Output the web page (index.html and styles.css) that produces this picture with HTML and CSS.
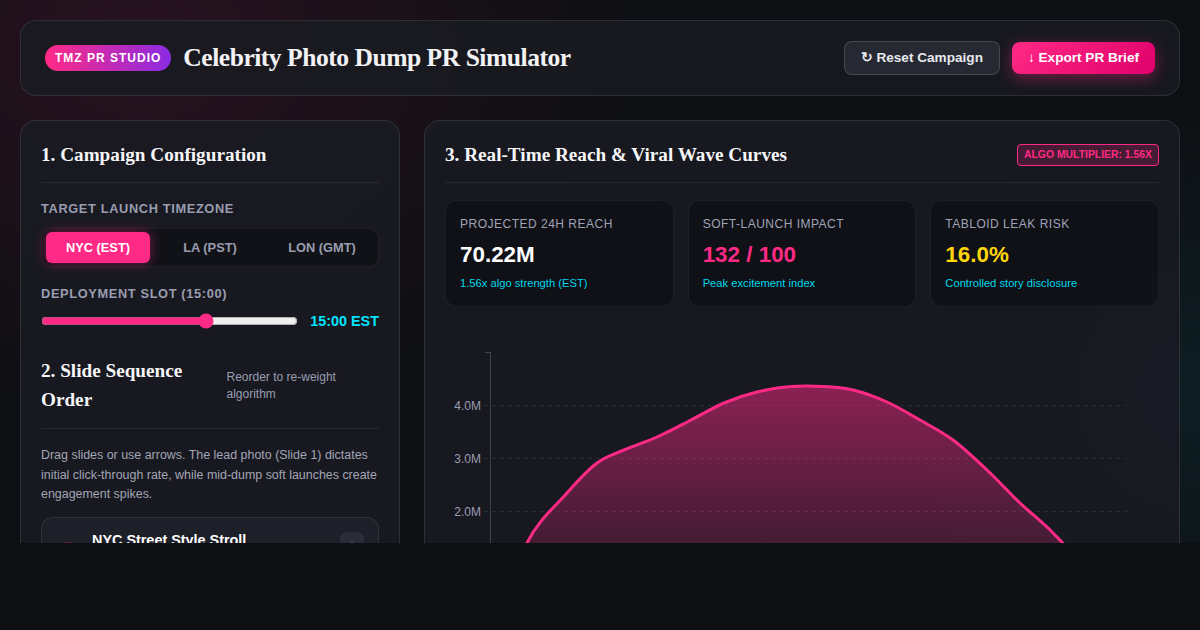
FILE: index.html
```html
<!DOCTYPE html>
<html lang="en">
<head>
<meta charset="utf-8">
<title>Celebrity Photo Dump PR Simulator</title>
<link rel="stylesheet" href="styles.css">
</head>
<body>
<div class="app">
  <header class="topbar">
    <div class="brand">
      <span class="brand-badge">TMZ PR STUDIO</span>
      <h1 class="brand-title">Celebrity Photo Dump PR Simulator</h1>
    </div>
    <div class="actions">
      <button class="btn btn-ghost">↻ Reset Campaign</button>
      <button class="btn btn-primary">↓ Export PR Brief</button>
    </div>
  </header>

  <main class="layout">
    <section class="panel">
      <div class="panel-head">
        <h2 class="panel-title">1. Campaign Configuration</h2>
      </div>

      <div class="field">
        <div class="field-label">Target Launch Timezone</div>
        <div class="segmented">
          <button class="seg-btn is-active">NYC (EST)</button>
          <button class="seg-btn">LA (PST)</button>
          <button class="seg-btn">LON (GMT)</button>
        </div>
      </div>

      <div class="field">
        <div class="field-label">Deployment Slot (15:00)</div>
        <div class="slider-row">
          <input class="slider" type="range" min="0" max="23" value="15">
          <span class="slider-value">15:00 EST</span>
        </div>
      </div>

      <div class="panel-head section-gap">
        <h2 class="panel-title">2. Slide Sequence Order</h2>
        <span class="panel-hint">Reorder to re-weight algorithm</span>
      </div>

      <p class="panel-desc">Drag slides or use arrows. The lead photo (Slide 1) dictates initial click-through rate, while mid-dump soft launches create engagement spikes.</p>

      <div class="slide-list">
        <div class="slide-card">
          <div class="slide-thumb">1</div>
          <div class="slide-info">
            <div class="slide-name">NYC Street Style Stroll</div>
            <div class="slide-meta">Lead hook · Candid outfit shot</div>
            <div class="slide-tag">Hook 92</div>
          </div>
          <div class="slide-controls">
            <button class="slide-move">▲</button>
            <button class="slide-move">▼</button>
          </div>
        </div>
      </div>
    </section>

    <section class="panel">
      <div class="panel-head">
        <h2 class="panel-title">3. Real-Time Reach &amp; Viral Wave Curves</h2>
        <span class="algo-badge">Algo Multiplier: 1.56x</span>
      </div>

      <div class="stats">
        <div class="stat">
          <div class="stat-label">Projected 24h Reach</div>
          <div class="stat-value">70.22M</div>
          <div class="stat-sub">1.56x algo strength (EST)</div>
        </div>
        <div class="stat">
          <div class="stat-label">Soft-Launch Impact</div>
          <div class="stat-value stat-pink">132 / 100</div>
          <div class="stat-sub">Peak excitement index</div>
        </div>
        <div class="stat">
          <div class="stat-label">Tabloid Leak Risk</div>
          <div class="stat-value stat-gold">16.0%</div>
          <div class="stat-sub">Controlled story disclosure</div>
        </div>
      </div>

      <svg class="chart" viewBox="445 330 714 300" width="714" height="300" aria-label="Reach curve">
        <defs>
          <linearGradient id="areaFill" gradientUnits="userSpaceOnUse" x1="0" y1="386" x2="0" y2="617">
            <stop offset="0" stop-color="#ff2a85" stop-opacity="0.5"/>
            <stop offset="1" stop-color="#ff2a85" stop-opacity="0.05"/>
          </linearGradient>
        </defs>
        <g class="grid">
          <line x1="484" y1="405.5" x2="1127" y2="405.5"/>
          <line x1="484" y1="458.5" x2="1127" y2="458.5"/>
          <line x1="484" y1="511.5" x2="1127" y2="511.5"/>
          <line x1="484" y1="564.5" x2="1127" y2="564.5"/>
        </g>
        <line class="axis" x1="490.5" y1="352" x2="490.5" y2="630"/>
        <line class="axis" x1="485" y1="352.5" x2="490.5" y2="352.5"/>
        <g class="ticks">
          <text x="481" y="409.5">4.0M</text>
          <text x="481" y="462.5">3.0M</text>
          <text x="481" y="515.5">2.0M</text>
          <text x="481" y="568.5">1.0M</text>
        </g>
        <path class="area" d="M500,630 C504.5,615.5 515.8,565.8 527,543 C538.2,520.2 555.3,506.3 567,493 C578.7,479.7 587.5,470.2 597,463 C606.5,455.8 614,454.3 624,450 C634,445.7 645.8,442 657,437 C668.2,432 679.8,425.7 691,420 C702.2,414.3 713,407.7 724,403 C735,398.3 745.8,394.7 757,392 C768.2,389.3 779.8,387.3 791,386.5 C802.2,385.7 813.7,386 824,386.5 C834.3,387 842.5,387.5 853,390 C863.5,392.5 875.8,397 887,402 C898.2,407 909,413.7 920,420 C931,426.3 941.8,431.7 953,440 C964.2,448.3 975.8,459.5 987,470 C998.2,480.5 1009,492.5 1020,503 C1031,513.5 1043,522.5 1053,533 C1063,543.5 1070.5,549.8 1080,566 C1089.5,582.2 1105,619.3 1110,630 Z"/>
        <path class="line" d="M500,630 C504.5,615.5 515.8,565.8 527,543 C538.2,520.2 555.3,506.3 567,493 C578.7,479.7 587.5,470.2 597,463 C606.5,455.8 614,454.3 624,450 C634,445.7 645.8,442 657,437 C668.2,432 679.8,425.7 691,420 C702.2,414.3 713,407.7 724,403 C735,398.3 745.8,394.7 757,392 C768.2,389.3 779.8,387.3 791,386.5 C802.2,385.7 813.7,386 824,386.5 C834.3,387 842.5,387.5 853,390 C863.5,392.5 875.8,397 887,402 C898.2,407 909,413.7 920,420 C931,426.3 941.8,431.7 953,440 C964.2,448.3 975.8,459.5 987,470 C998.2,480.5 1009,492.5 1020,503 C1031,513.5 1043,522.5 1053,533 C1063,543.5 1070.5,549.8 1080,566 C1089.5,582.2 1105,619.3 1110,630"/>
      </svg>
    </section>
  </main>
</div>
</body>
</html>
```

FILE: styles.css
```css
* { box-sizing: border-box; }

html, body {
  margin: 0;
  background: #0e0f13;
}

body {
  font-family: "Liberation Sans", Arial, sans-serif;
  color: #e8e9ef;
}

.app {
  height: 543px;
  overflow: hidden;
  padding: 20px;
  background:
    radial-gradient(ellipse 700px 520px at 12% 8%, rgba(255, 42, 133, 0.11), transparent 70%),
    radial-gradient(ellipse 420px 420px at 100% 72%, rgba(0, 229, 255, 0.07), transparent 70%),
    #0e0f13;
}

/* Header */
.topbar {
  display: flex;
  align-items: center;
  justify-content: space-between;
  padding: 20px 24px;
  margin-bottom: 24px;
  border: 1px solid rgba(255, 255, 255, 0.1);
  border-radius: 16px;
  background: rgba(25, 26, 33, 0.88);
}

.brand {
  display: flex;
  align-items: center;
  gap: 12px;
}

.brand-badge {
  padding: 6px 10px;
  border-radius: 999px;
  background: linear-gradient(90deg, #ff2a85, #8a2be2);
  color: #fff;
  font-size: 12px;
  font-weight: 700;
  letter-spacing: 1px;
  line-height: 14px;
}

.brand-title {
  margin: 0;
  font-family: "Liberation Serif", "Times New Roman", serif;
  font-size: 25.6px;
  font-weight: 700;
  letter-spacing: -0.5px;
  color: #f2f2f5;
}

.actions {
  display: flex;
  align-items: center;
  gap: 12px;
}

.btn {
  font-family: inherit;
  font-size: 13.6px;
  font-weight: 700;
  line-height: 1.15;
  padding: 8px 16px;
  border-radius: 8px;
  cursor: pointer;
}

.btn-ghost {
  background: #262932;
  color: #e8e9ef;
  border: 1px solid rgba(255, 255, 255, 0.15);
}

.btn-primary {
  background: linear-gradient(135deg, #ff2a85, #e0006b);
  color: #fff;
  border: 0;
  box-shadow: 0 4px 15px rgba(255, 42, 133, 0.4);
}

/* Layout */
.layout {
  display: grid;
  grid-template-columns: 380px 1fr;
  gap: 24px;
  align-items: start;
}

.panel {
  padding: 20px;
  border: 1px solid rgba(255, 255, 255, 0.1);
  border-radius: 16px;
  background: rgba(25, 26, 34, 0.88);
}

.panel-head {
  display: flex;
  align-items: center;
  justify-content: space-between;
  padding-bottom: 13px;
  margin-bottom: 17px;
  border-bottom: 1px solid rgba(255, 255, 255, 0.07);
}

.section-gap {
  margin-top: 28px;
}

.panel-title {
  margin: 0;
  font-family: "Liberation Serif", "Times New Roman", serif;
  font-size: 19.2px;
  font-weight: 700;
  line-height: 1.5;
  color: #f6f6f8;
}

.panel-hint {
  font-size: 12px;
  line-height: 17.5px;
  color: #9a9db0;
}

/* Fields */
.field {
  margin-bottom: 18px;
}

.field-label {
  margin-bottom: 10px;
  font-size: 12.8px;
  font-weight: 700;
  line-height: 18px;
  letter-spacing: 0.64px;
  text-transform: uppercase;
  color: #9a9db0;
}

.segmented {
  display: flex;
  gap: 8px;
  padding: 3px 4px;
  border: 1px solid rgba(255, 255, 255, 0.06);
  border-radius: 10px;
  background: #111217;
}

.seg-btn {
  flex: 1;
  height: 31px;
  padding: 0;
  border: 0;
  border-radius: 6px;
  background: transparent;
  font-family: inherit;
  font-size: 12.8px;
  font-weight: 700;
  line-height: 15px;
  color: #9a9db0;
}

.seg-btn.is-active {
  background: #ff2a85;
  color: #fff;
  box-shadow: 0 0 12px rgba(255, 42, 133, 0.45);
}

.slider-row {
  display: flex;
  align-items: center;
  gap: 12px;
}

.slider {
  flex: 1;
  min-width: 0;
  margin: 0;
  accent-color: #ff2a85;
}

.slider-value {
  font-size: 14.4px;
  font-weight: 700;
  color: #00e5ff;
}

.panel-desc {
  margin: 0 0 12px;
  font-size: 12.45px;
  line-height: 19.5px;
  color: #a3a6b4;
}

/* Slides */
.slide-card {
  display: flex;
  align-items: center;
  gap: 8px;
  padding: 14px;
  border: 1px solid rgba(255, 255, 255, 0.08);
  border-radius: 12px;
  background: #1e2029;
}

.slide-thumb {
  flex: none;
  width: 32px;
  height: 32px;
  margin-left: -4px;
  border-radius: 50%;
  background: rgba(255, 42, 133, 0.35);
  color: #fff;
  font-size: 12px;
  font-weight: 700;
  display: flex;
  align-items: center;
  justify-content: center;
}

.slide-info {
  flex: 1;
}

.slide-name {
  font-size: 14.4px;
  font-weight: 700;
  line-height: 17px;
  color: #fff;
}

.slide-meta {
  margin-top: 4px;
  font-size: 11.5px;
  line-height: 15px;
  color: #9a9db0;
}

.slide-tag {
  margin-top: 4px;
  font-size: 10px;
  line-height: 12px;
  color: #00e5ff;
}

.slide-controls {
  display: flex;
  flex-direction: column;
  gap: 4px;
}

.slide-move {
  width: 24px;
  height: 24px;
  padding: 0;
  border: 0;
  border-radius: 6px;
  background: #2a2c37;
  color: #8f93a3;
  font-size: 9px;
}

/* Right panel */
.algo-badge {
  padding: 4px 6px;
  border: 1px solid #ff2a85;
  border-radius: 4px;
  background: rgba(255, 42, 133, 0.2);
  color: #ff2a85;
  font-size: 10.4px;
  font-weight: 700;
  line-height: 12.5px;
  text-transform: uppercase;
}

.stats {
  display: grid;
  grid-template-columns: repeat(3, 1fr);
  gap: 14px;
}

.stat {
  padding: 16px 14px;
  border: 1px solid rgba(255, 255, 255, 0.06);
  border-radius: 12px;
  background: rgba(8, 9, 13, 0.5);
}

.stat-label {
  margin-bottom: 9px;
  font-size: 12px;
  line-height: 14.4px;
  letter-spacing: 0.5px;
  text-transform: uppercase;
  color: #a0a3b5;
}

.stat-value {
  margin-bottom: 9px;
  font-size: 22.4px;
  font-weight: 700;
  line-height: 27px;
  color: #fff;
}

.stat-pink { color: #ff2a85; }
.stat-gold { color: #ffd60a; }

.stat-sub {
  font-size: 11.2px;
  line-height: 13.4px;
  color: #00d8ec;
}

.chart {
  display: block;
  margin-top: 23px;
  width: 714px;
  height: 300px;
}

.chart .grid line {
  stroke: rgba(255, 255, 255, 0.09);
  stroke-width: 1;
  stroke-dasharray: 4 4;
}

.chart .axis {
  stroke: rgba(255, 255, 255, 0.18);
  stroke-width: 1;
}

.chart .ticks text {
  font-family: "Liberation Sans", Arial, sans-serif;
  font-size: 12px;
  fill: #9a9db0;
  text-anchor: end;
}

.chart .area {
  fill: url(#areaFill);
}

.chart .line {
  fill: none;
  stroke: #ff2a85;
  stroke-width: 3;
  stroke-linejoin: round;
}
```
